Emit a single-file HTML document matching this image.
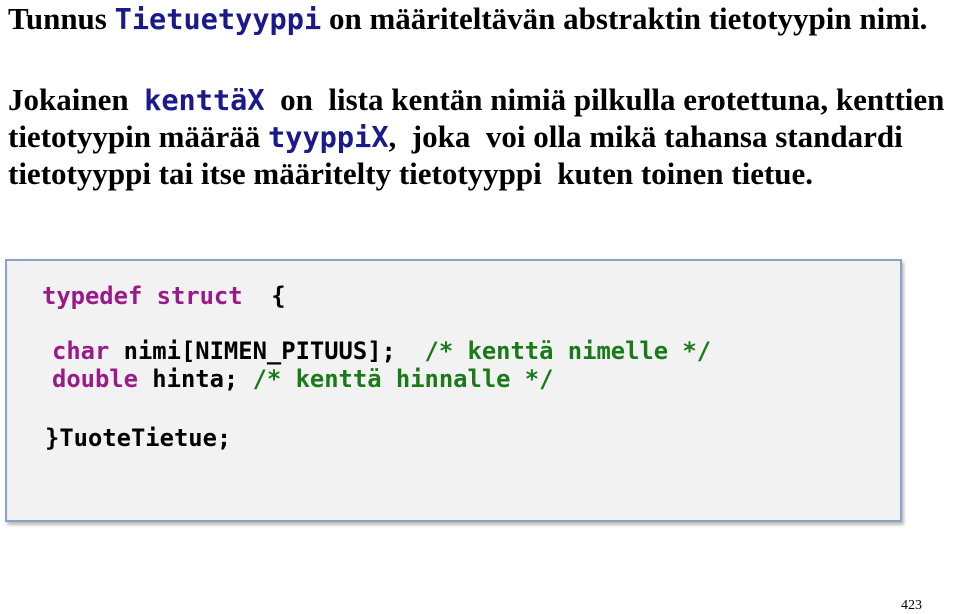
<!DOCTYPE html>
<html><head><meta charset="utf-8"><style>
body{margin:0;width:960px;height:613px;background:#fff;position:relative;overflow:hidden;font-family:"Liberation Serif",serif;font-weight:bold;color:#000}
.l{position:absolute;left:8px;font-size:31px;white-space:nowrap;line-height:1}
.m{font-family:"DejaVu Sans Mono",monospace;font-weight:bold;color:#1a1a8c;font-size:28.6px}
.box{position:absolute;left:5px;top:259px;width:893px;height:259px;background:#f2f2f2;border:2px solid #8aa2c8;box-shadow:2px 3px 3px #bbb}
.c{position:absolute;font-family:"DejaVu Sans Mono",monospace;font-weight:bold;font-size:23.8px;white-space:pre;line-height:1;color:#000}
.k{color:#9b1a8a}.g{color:#1a7a1a}
</style></head><body>
<div class="l" style="top:3px">Tunnus <span class="m">Tietuetyyppi</span> on määriteltävän abstraktin tietotyypin nimi.</div>
<div class="l" style="top:84px">Jokainen &nbsp;<span class="m">kenttäX</span> &nbsp;on &nbsp;lista kentän nimiä pilkulla erotettuna, kenttien</div>
<div class="l" style="top:121px">tietotyypin määrää <span class="m">tyyppiX</span>, &nbsp;joka &nbsp;voi olla mikä tahansa standardi</div>
<div class="l" style="top:158px">tietotyyppi tai itse määritelty tietotyyppi &nbsp;kuten toinen tietue.</div>
<div class="box"></div>
<div class="c" style="left:42px;top:285px"><span class="k">typedef struct</span>  {</div>
<div class="c" style="left:52px;top:340px"><span class="k">char</span> nimi[NIMEN_PITUUS];  <span class="g">/* kenttä nimelle */</span></div>
<div class="c" style="left:52px;top:368px"><span class="k">double</span> hinta; <span class="g">/* kenttä hinnalle */</span></div>
<div class="c" style="left:45px;top:427px">}TuoteTietue;</div>
<div style="position:absolute;left:901px;top:598px;font-size:14px;font-weight:normal">423</div>
</body></html>
